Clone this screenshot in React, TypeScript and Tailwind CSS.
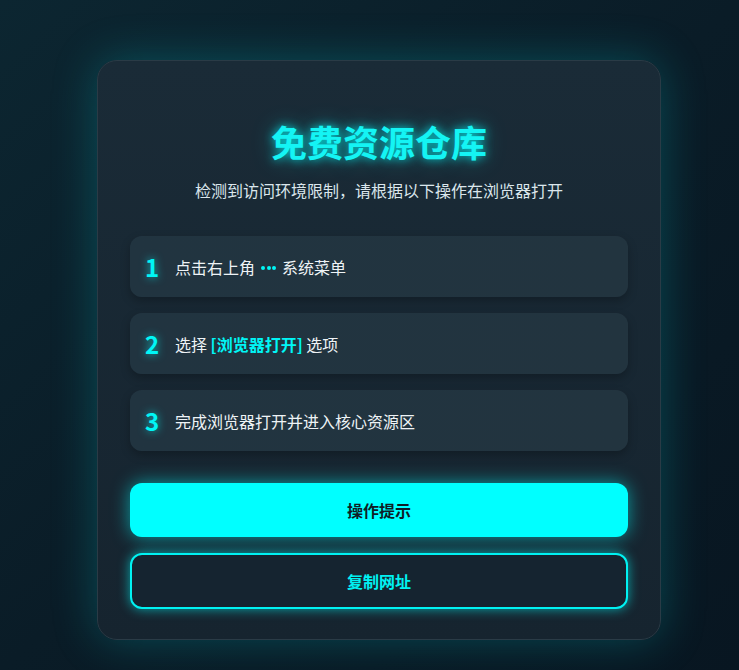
import { useState } from "react";

const steps = [
  {
    n: "1",
    body: (
      <>
        点击右上角
        <span className="mx-[6px] inline-flex translate-y-[-1px] items-center gap-[1.5px] align-middle">
          <span className="h-[4px] w-[4px] rounded-full bg-[#00f6f6]" />
          <span className="h-[4px] w-[4px] rounded-full bg-[#00f6f6]" />
          <span className="h-[4px] w-[4px] rounded-full bg-[#00f6f6]" />
        </span>
        系统菜单
      </>
    ),
  },
  {
    n: "2",
    body: (
      <>
        选择 <span className="font-bold text-[#00f6f6]">[浏览器打开]</span> 选项
      </>
    ),
  },
  { n: "3", body: <>完成浏览器打开并进入核心资源区</> },
];

const App = () => {
  const [copied, setCopied] = useState(false);

  return (
    <div
      className="flex min-h-[670px] w-full justify-center bg-gradient-to-br from-[#0c2631] via-[#0a1c27] to-[#081621] pl-[19px] pt-[60px]"
      style={{ fontFamily: '"Noto Sans CJK SC", "Noto Sans", sans-serif' }}
    >
      <div className="h-[580px] w-[564px] rounded-[20px] border border-[#2a3b46] bg-gradient-to-b from-[#1a2b37] to-[#16242f] px-8 pt-[58px] shadow-[0_0_45px_rgba(0,200,210,0.28)]">
        {/* 标题 */}
        <h1 className="text-center text-[36px] font-bold leading-[44px] text-[#14f4f4] [text-shadow:0_0_10px_rgba(0,255,255,0.75),0_0_22px_rgba(0,255,255,0.35)]">
          免费资源仓库
        </h1>
        <p className="mt-[15px] text-center text-[16px] leading-[24px] text-[#dbe6ec]">
          检测到访问环境限制，请根据以下操作在浏览器打开
        </p>

        {/* 步骤 */}
        <div className="mt-[34px] flex flex-col gap-4">
          {steps.map((s) => (
            <div
              key={s.n}
              className="flex h-[61px] items-center rounded-[12px] bg-gradient-to-r from-[#213440] to-[#22343f] pl-[15px] shadow-[0_4px_10px_rgba(0,0,0,0.25)]"
            >
              <span className="w-[30px] text-[24px] font-bold leading-none text-[#00f6f6] [text-shadow:0_0_8px_rgba(0,255,255,0.7)]">
                {s.n}
              </span>
              <span className="text-[16px] leading-[22px] text-[#eef3f6]">
                {s.body}
              </span>
            </div>
          ))}
        </div>

        {/* 按钮 */}
        <button
          type="button"
          className="mt-[32px] flex h-[54px] w-full items-center justify-center rounded-[12px] bg-[#00ffff] text-[16px] font-bold text-[#0f1d26] shadow-[0_0_18px_rgba(0,255,255,0.55)]"
        >
          操作提示
        </button>
        <button
          type="button"
          onClick={() => setCopied(true)}
          className="mt-[16px] flex h-[56px] w-full items-center justify-center rounded-[12px] border-2 border-[#00f2f2] bg-[#152430] text-[16px] font-bold text-[#00f2f2] shadow-[0_0_12px_rgba(0,255,255,0.6)]"
        >
          {copied ? "已复制" : "复制网址"}
        </button>
      </div>
    </div>
  );
};

export default App;
